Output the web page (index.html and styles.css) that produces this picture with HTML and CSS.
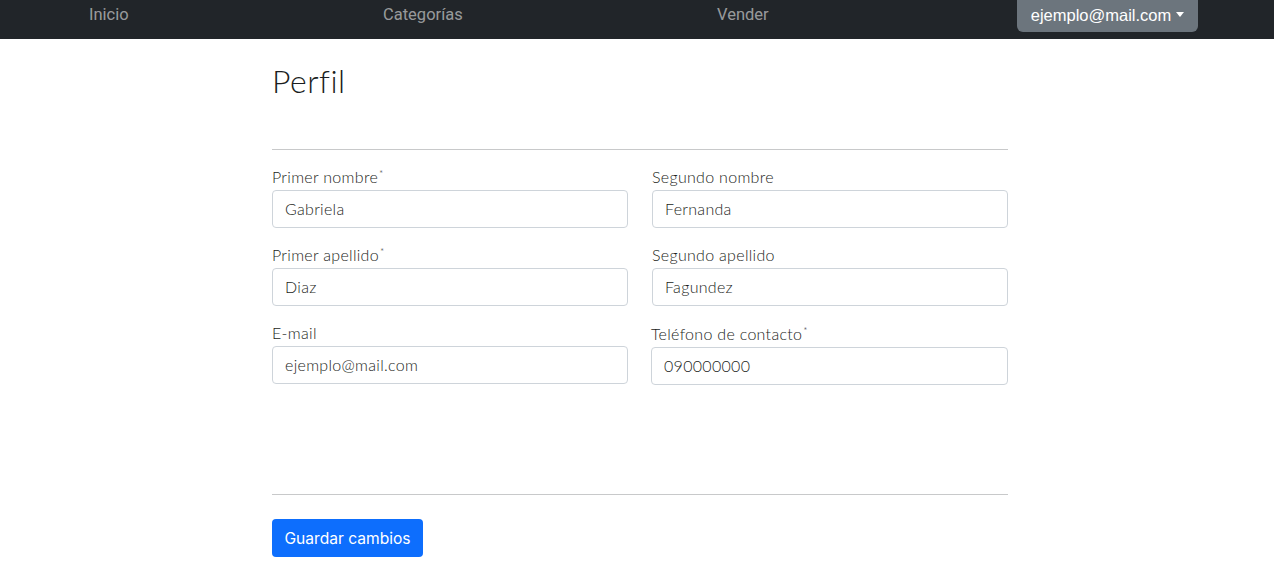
FILE: index.html
```html
<!DOCTYPE html>
<html lang="es">
<head>
<meta charset="utf-8">
<title>Perfil</title>
<link rel="stylesheet" href="styles.css">
</head>
<body>
<nav class="navbar">
  <a class="nav-link item-1" href="#">Inicio</a>
  <a class="nav-link item-2" href="#">Categorías</a>
  <a class="nav-link item-3" href="#">Vender</a>
  <button class="user-btn" type="button">ejemplo@mail.com<span class="caret"></span></button>
</nav>
<main class="container">
  <h1 class="title">Perfil</h1>
  <hr class="divider top">
  <form class="form-grid">
    <div class="field">
      <label class="form-label">Primer nombre<sup class="req">*</sup></label>
      <input class="form-control" type="text" value="Gabriela">
    </div>
    <div class="field">
      <label class="form-label">Segundo nombre</label>
      <input class="form-control" type="text" value="Fernanda">
    </div>
    <div class="field">
      <label class="form-label">Primer apellido<sup class="req">*</sup></label>
      <input class="form-control" type="text" value="Diaz">
    </div>
    <div class="field">
      <label class="form-label">Segundo apellido</label>
      <input class="form-control" type="text" value="Fagundez">
    </div>
    <div class="field">
      <label class="form-label">E-mail</label>
      <input class="form-control" type="text" value="ejemplo@mail.com">
    </div>
    <div class="field shifted">
      <label class="form-label">Teléfono de contacto<sup class="req">*</sup></label>
      <input class="form-control" type="text" value="090000000">
    </div>
  </form>
  <hr class="divider bottom">
  <button class="btn-primary" type="button">Guardar cambios</button>
</main>
</body>
</html>
```
FILE: styles.css
```css
* { box-sizing: border-box; }
html, body { margin: 0; padding: 0; }
body {
  font-family: "Lato", "Open Sans", sans-serif;
  color: #212529;
  background: #fff;
  font-size: 16px;
}
.navbar {
  height: 39px;
  background: #212529;
  display: flex;
  align-items: flex-start;
  padding-left: 89px;
  font-family: "Roboto", "Liberation Sans", sans-serif;
  overflow: hidden;
}
.nav-link {
  color: rgba(255,255,255,.55);
  text-decoration: none;
  font-size: 16.5px;
  line-height: 30px;
}
.item-1 { width: 294px; }
.item-2 { width: 334px; }
.item-3 { width: 300px; }
.user-btn {
  margin-top: -6px;
  height: 38px;
  width: 181px;
  padding: 4px 12px 0;
  border: 0;
  border-radius: 6px;
  background: #6c757d;
  color: #fff;
  font-family: "Liberation Sans", Arial, sans-serif;
  font-size: 16.5px;
  line-height: 24px;
  display: flex;
  align-items: center;
  justify-content: center;
  white-space: nowrap;
}
.caret {
  display: inline-block;
  margin-left: 5px;
  width: 0; height: 0;
  border-left: 4.5px solid transparent;
  border-right: 4.5px solid transparent;
  border-top: 5px solid #fff;
  position: relative;
  top: -1px;
}
.container {
  width: 736px;
  margin-left: 272px;
  padding-top: 23px;
}
.title {
  margin: 0;
  font-size: 32px;
  font-weight: 300;
  line-height: 38px;
  letter-spacing: 0.5px;
  color: #1b1e21;
}
.divider {
  border: 0;
  border-top: 1px solid #c8c9ca;
  margin: 0;
}
.divider.top { margin-top: 49px; }
.divider.bottom { margin-top: 109px; }
.form-grid {
  display: grid;
  grid-template-columns: 356px 356px;
  column-gap: 24px;
  row-gap: 16px;
  margin-top: 16px;
}
.field { display: flex; flex-direction: column; }
.shifted { margin-top: 1px; margin-left: -1px; }
.form-label {
  font-size: 16px;
  font-weight: 300;
  line-height: 22px;
  margin-bottom: 2px;
  letter-spacing: 0.3px;
  color: #1b1e21;
}
.req { font-size: 10px; vertical-align: top; line-height: 14px; margin-left: 1px; }
.form-control {
  height: 38px;
  border: 1px solid #ced4da;
  border-radius: 4px;
  padding: 0 12px 2px;
  font-family: inherit;
  font-size: 16px;
  font-weight: 300;
  letter-spacing: 0.3px;
  color: #1b1e21;
  background: #fff;
  width: 100%;
}
.btn-primary {
  margin-top: 24px;
  height: 38px;
  width: 151px;
  padding: 0;
  border: 0;
  border-radius: 4px;
  background: #0d6efd;
  color: #fff;
  font-family: "Inter", "Roboto", sans-serif;
  font-size: 15.6px;
  white-space: nowrap;
}
```
